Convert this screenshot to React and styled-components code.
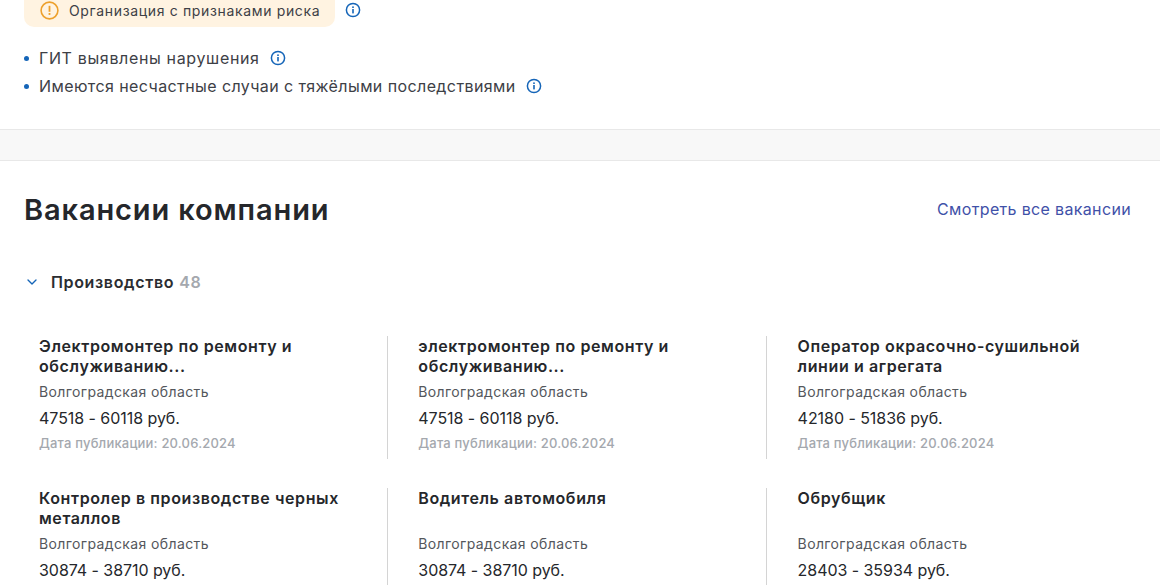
import styled, { createGlobalStyle } from "styled-components"
import { ChevronDown } from "lucide-react"

const GlobalStyle = createGlobalStyle`
  html, body {
    margin: 0;
    padding: 0;
    background: #fff;
    overflow: hidden;
  }
  body {
    font-family: "Inter", "Noto Sans", sans-serif;
    color: #2b2d31;
  }
  #root {
    height: 585px;
    overflow: hidden;
  }
`

const TopSection = styled.section`
  height: 130px;
  box-sizing: border-box;
  padding: 0 24px;
  border-bottom: 1px solid #e8e8e8;
`

const RiskRow = styled.div`
  display: flex;
  align-items: flex-start;
  gap: 10px;
  height: 27px;
`

const RiskBadge = styled.div`
  display: flex;
  align-items: center;
  gap: 10px;
  width: 311px;
  height: 27px;
  box-sizing: border-box;
  padding: 0 0 7px 16px;
  background: #fff3e1;
  border-radius: 0 0 10px 10px;
  font-size: 14px;
  letter-spacing: 0.65px;
  white-space: nowrap;
  color: #3d4046;
`

const RiskInfo = styled.span`
  display: flex;
  padding-top: 2px;
`

const RiskList = styled.ul`
  list-style: none;
  margin: 17px 0 0;
  padding: 0;
`

const RiskItem = styled.li`
  display: flex;
  align-items: center;
  gap: 10px;
  height: 28px;
  font-size: 16px;
  letter-spacing: ${(p) => p.$spacing};
  color: #3d4046;
  &::before {
    content: "";
    width: 5px;
    height: 5px;
    border-radius: 50%;
    background: #1565b8;
  }
`

const Band = styled.div`
  height: 30px;
  background: #f8f8f8;
  border-bottom: 1px solid #e8e8e8;
`

const VacancySection = styled.section`
  padding: 29px 29px 0 24px;
`

const Header = styled.div`
  display: flex;
  align-items: center;
  justify-content: space-between;
  height: 38px;
`

const Title = styled.h2`
  margin: 0;
  font-size: 29px;
  font-weight: 600;
  letter-spacing: 0.88px;
  color: #25272b;
`

const AllLink = styled.a`
  font-size: 16px;
  letter-spacing: 0.34px;
  color: #3f51a8;
  text-decoration: none;
`

const GroupHeader = styled.div`
  display: flex;
  align-items: center;
  gap: 11px;
  margin-top: 42px;
  height: 24px;
  font-size: 16px;
  font-weight: 600;
  letter-spacing: 0.65px;
  color: #2b2d31;
`

const GroupCount = styled.span`
  color: #a4a8ae;
  margin-left: 5px;
`

const Grid = styled.div`
  display: grid;
  grid-template-columns: repeat(3, 364px);
  column-gap: 15.3px;
  row-gap: 29px;
  margin-top: 42px;
`

const Card = styled.article`
  box-sizing: border-box;
  height: 123px;
  padding: 0 30px 0 15px;
  border-right: ${(p) => (p.$last ? "none" : "1px solid #d4d4d4")};
`

const CardTitle = styled.h3`
  margin: 0;
  height: 41px;
  font-size: 16px;
  line-height: 20px;
  font-weight: 600;
  letter-spacing: 0.6px;
  color: #25272b;
`

const Region = styled.div`
  margin-top: 5px;
  font-size: 14px;
  line-height: 20px;
  letter-spacing: 0.38px;
  color: #54575c;
`

const Salary = styled.div`
  margin-top: 6px;
  font-size: 16px;
  line-height: 20px;
  letter-spacing: -0.05px;
  color: #25272b;
`

const PublishDate = styled.div`
  margin-top: 5px;
  font-size: 13px;
  line-height: 20px;
  font-weight: 500;
  letter-spacing: 0.19px;
  color: #a4a8ae;
`

const InfoIcon = () => (
  <svg width="16" height="16" viewBox="0 0 16 16" fill="none">
    <circle cx="8" cy="8" r="6.6" stroke="#1565b8" strokeWidth="1.5" />
    <rect x="7.2" y="7" width="1.6" height="4.4" fill="#1565b8" />
    <rect x="7.2" y="4.4" width="1.6" height="1.6" fill="#1565b8" />
  </svg>
)

const WarnIcon = () => (
  <svg width="19" height="19" viewBox="0 0 19 19" fill="none">
    <circle cx="9.5" cy="9.5" r="8.4" stroke="#eda02c" strokeWidth="1.6" />
    <rect x="8.6" y="4.8" width="1.8" height="6" fill="#eda02c" />
    <rect x="8.6" y="12" width="1.8" height="1.9" fill="#eda02c" />
  </svg>
)

const vacancies = [
  { title: "Электромонтер по ремонту и обслуживанию...", salary: "47518 - 60118 руб." },
  { title: "электромонтер по ремонту и обслуживанию...", salary: "47518 - 60118 руб." },
  { title: "Оператор окрасочно-сушильной линии и агрегата", salary: "42180 - 51836 руб." },
  { title: "Контролер в производстве черных металлов", salary: "30874 - 38710 руб." },
  { title: "Водитель автомобиля", salary: "30874 - 38710 руб." },
  { title: "Обрубщик", salary: "28403 - 35934 руб." },
]

export default function App() {
  return (
    <>
      <GlobalStyle />
      <TopSection>
        <RiskRow>
          <RiskBadge>
            <WarnIcon />
            Организация с признаками риска
          </RiskBadge>
          <RiskInfo>
            <InfoIcon />
          </RiskInfo>
        </RiskRow>
        <RiskList>
          <RiskItem $spacing="0.65px">
            ГИТ выявлены нарушения <InfoIcon />
          </RiskItem>
          <RiskItem $spacing="0.41px">
            Имеются несчастные случаи с тяжёлыми последствиями <InfoIcon />
          </RiskItem>
        </RiskList>
      </TopSection>
      <Band />
      <VacancySection>
        <Header>
          <Title>Вакансии компании</Title>
          <AllLink href="#">Смотреть все вакансии</AllLink>
        </Header>
        <GroupHeader>
          <ChevronDown size={16} color="#1565b8" strokeWidth={2} />
          <span>
            Производство<GroupCount>48</GroupCount>
          </span>
        </GroupHeader>
        <Grid>
          {vacancies.map((v, i) => (
            <Card key={i} $last={i % 3 === 2}>
              <CardTitle>{v.title}</CardTitle>
              <Region>Волгоградская область</Region>
              <Salary>{v.salary}</Salary>
              <PublishDate>Дата публикации: 20.06.2024</PublishDate>
            </Card>
          ))}
        </Grid>
      </VacancySection>
    </>
  )
}
